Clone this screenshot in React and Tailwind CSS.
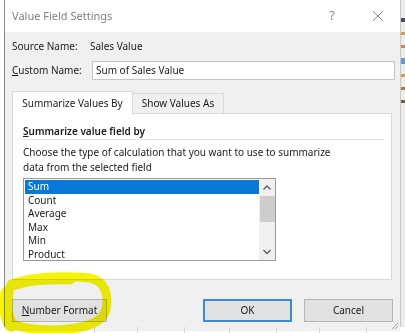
import React from 'react';

const font = { fontFamily: '"Noto Sans", "Open Sans", sans-serif' };

const items = ['Sum', 'Count', 'Average', 'Max', 'Min', 'Product'];

const Btn = ({ children, primary, className = '' }) => (
  <div
    className={`h-[23px] flex items-center justify-center bg-[#e1e1e1] text-[#1a1a1a] ${
      primary ? 'border-2 border-[#3c8ad6]' : 'border border-[#b5b5b5]'
    } ${className}`}
  >
    {children}
  </div>
);

const ListBox = () => (
  <div className="mt-[3px] w-[253px] h-[83px] border border-[#9a9a9a] bg-white flex">
    <div className="flex-1 pt-[1px] pl-[1px]">
      {items.map((it, i) => (
        <div
          key={it}
          className={`h-[13.6px] leading-[13.6px] pl-[3px] ${
            i === 0 ? 'bg-[#0a78d7] text-white' : 'text-[#1a1a1a]'
          }`}
        >
          {it}
        </div>
      ))}
    </div>
    <div className="w-[16px] bg-[#f0f0f0] flex flex-col items-center">
      <svg width="16" height="17" viewBox="0 0 16 17" className="shrink-0">
        <path d="M4.5 10.5 L8 7 L11.5 10.5" fill="none" stroke="#606060" strokeWidth="1.4" />
      </svg>
      <div className="w-[15px] h-[26px] bg-[#cdcdcd]" />
      <div className="flex-1" />
      <svg width="16" height="17" viewBox="0 0 16 17" className="shrink-0">
        <path d="M4.5 7 L8 10.5 L11.5 7" fill="none" stroke="#606060" strokeWidth="1.4" />
      </svg>
    </div>
  </div>
);

export default function App() {
  return (
    <div className="w-[405px] h-[333px] relative overflow-hidden bg-white text-[10px]" style={font}>
      <div className="flex h-[327px]">
        <div className="w-[4px] bg-white" />
        {/* Dialog */}
        <div className="w-[396px] flex flex-col border-l border-[#8c8c8c] border-b border-b-[#b0b0b0]">
          {/* Title bar */}
          <div className="h-[32px] bg-white flex items-center shrink-0">
            <span className="ml-[7px] text-[11px] text-[#808080]">Value Field Settings</span>
            <span className="ml-auto mr-[37px] text-[13px] text-[#8a8a8a]">?</span>
            <svg width="12" height="12" viewBox="0 0 12 12" className="mr-[16px]">
              <path d="M1 1 L11 11 M11 1 L1 11" stroke="#8a8a8a" strokeWidth="1" />
            </svg>
          </div>
          {/* Body */}
          <div className="flex-1 bg-[#f0f0f0] pl-[7px] flex flex-col">
            <div className="mt-[7px] h-[14px] flex items-center text-[#1a1a1a]">
              <span className="w-[78px]">Source Name:</span>
              <span>Sales Value</span>
            </div>
            <div className="mt-[8px] h-[19px] flex items-center text-[#1a1a1a]">
              <span className="w-[80px]">
                <span className="underline">C</span>ustom Name:
              </span>
              <div className="w-[303px] h-[19px] bg-white border border-[#c4c4c4] flex items-center pl-[3px]">
                Sum of Sales Value
              </div>
            </div>
            {/* Tabs */}
            <div className="mt-[10px] h-[23px] flex items-end text-[#1a1a1a]">
              <div className="w-[121px] h-[23px] bg-white border border-[#d9d9d9] border-b-0 flex items-center justify-center relative top-[1px]">
                Summarize Values By
              </div>
              <div className="w-[91px] h-[20px] bg-[#f0f0f0] border border-[#d9d9d9] border-l-0 border-b-0 flex items-center justify-center">
                Show Values As
              </div>
            </div>
            {/* Panel */}
            <div className="w-[380px] h-[167px] bg-white border border-[#d9d9d9] pl-[10px] pr-[7px] flex flex-col text-[#1a1a1a]">
              <div className="mt-[10px] h-[14px] flex items-center font-semibold">
                <span className="underline">S</span>ummarize value field by
              </div>
              <div className="mt-[1px] h-px bg-[#e3e3e3]" />
              <div className="mt-[5px] leading-[15px]">
                Choose the type of calculation that you want to use to summarize
                <br />
                data from the selected field
              </div>
              <ListBox />
            </div>
            {/* Buttons */}
            <div className="mt-[19px] flex items-center text-[#1a1a1a]">
              <Btn className="w-[95px]">
                <span className="underline">N</span>umber Format
              </Btn>
              <Btn primary className="w-[89px] ml-[96px]">OK</Btn>
              <Btn className="w-[89px] ml-[12px]">Cancel</Btn>
            </div>
            <div className="flex-1 flex justify-end items-end">
              <svg width="8" height="8" viewBox="0 0 8 8" className="mr-[1px] mb-[1px]">
                <path d="M7 1 L1 7 M7 4 L4 7" stroke="#a0a0a0" strokeWidth="1" />
              </svg>
            </div>
          </div>
        </div>
        {/* Excel behind, right strip */}
        <div className="flex-1 bg-[#ececec] flex flex-col gap-[10px] pt-[18px] border-l border-[#c8c8c8]">
          <div className="h-[4px] bg-[#4a4a5a]" />
          <div className="h-[3px] bg-[#d0a050]" />
          <div className="h-[3px] bg-[#c09050]" />
          <div className="h-[6px] bg-[#6a98c8]" />
          <div className="h-[3px] bg-[#d0a050]" />
          <div className="h-[3px] bg-[#a07a50]" />
          <div className="h-[3px] bg-[#7a5a4a]" />
        </div>
      </div>
      {/* Grid below */}
      <div className="h-[6px] flex bg-white">
        <div className="w-[95px] border-r border-[#d4d4d4]" />
        <div className="w-[43px] border-r border-[#d4d4d4]" />
        <div className="w-[47px] border-r border-[#d4d4d4]" />
        <div className="w-[45px] border-r border-[#d4d4d4]" />
        <div className="w-[47px] border-r border-[#d4d4d4]" />
        <div className="w-[43px] border-r border-[#d4d4d4]" />
        <div className="w-[47px] border-r border-[#d4d4d4]" />
      </div>
      {/* Yellow highlighter */}
      <svg
        className="absolute left-0 top-[265px] pointer-events-none mix-blend-multiply"
        width="120"
        height="68"
        viewBox="0 0 120 68"
      >
        <g fill="none" stroke="#f6f30a" strokeLinecap="round">
          <path
            d="M12 62 C4 48 4 28 12 20 C26 12 62 10 90 13 C104 16 109 28 106 44 C103 58 86 64 55 65 C34 65 20 63 11 58"
            strokeWidth="9"
          />
          <path d="M7 28 C5 40 6 52 11 60" strokeWidth="13" />
          <path d="M12 20 C28 14 50 13 70 14" strokeWidth="11" />
        </g>
      </svg>
    </div>
  );
}
